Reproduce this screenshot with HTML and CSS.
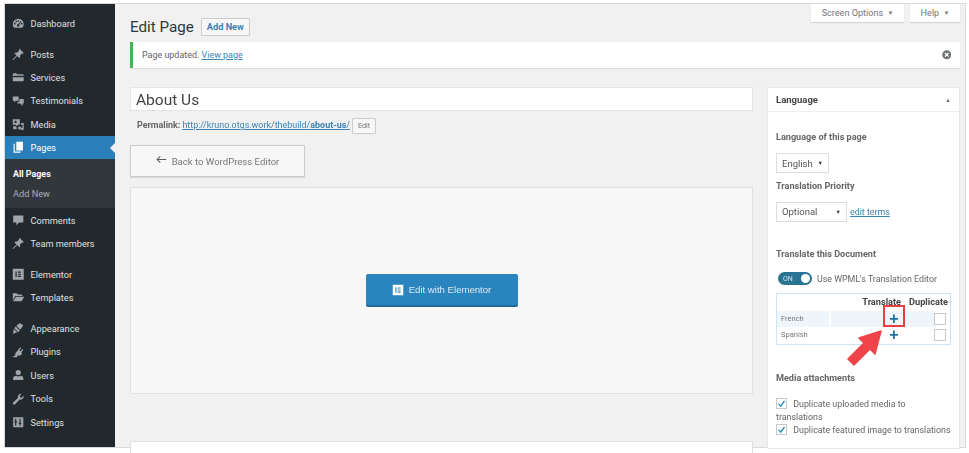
FILE: index.html
```html
<!DOCTYPE html>
<html lang="en">
<head>
<meta charset="utf-8">
<title>Edit Page</title>
<link rel="stylesheet" href="styles.css">
</head>
<body>
<svg class="sprite" width="0" height="0" aria-hidden="true">
  <symbol id="i-dash" viewBox="0 0 16 16"><path fill-rule="evenodd" d="M8 2.200a7 7 0 0 0-7 7c0 1.900.7 3.500 1.900 4.600h10.200A6.900 6.900 0 0 0 15 9.200a7 7 0 0 0-7-7zM3.500 9.600a1.100 1.100 0 1 1 0-2.200 1.100 1.100 0 0 1 0 2.200zm2-3a1.100 1.100 0 1 1 0-2.200 1.100 1.100 0 0 1 0 2.200zM8 4.200a1 1 0 1 1 0 2 1 1 0 0 1 0-2zm3.800 1.500L9.300 10a1.600 1.600 0 1 1-1.300-.8l2.900-4zm.7 3.900a1.100 1.100 0 1 1 0-2.200 1.100 1.100 0 0 1 0 2.200z"/></symbol>
  <symbol id="i-pin" viewBox="0 0 16 16"><path d="M9.700 1l5.300 5.300-1.100 1-1-.4-2.700 2.700c.4 1.300.2 2.700-.7 3.600L6.600 10.300 2 15l-1 .2.200-1L5.800 9.500 3 6.600c.9-.9 2.300-1.100 3.600-.7l2.700-2.700-.4-1z"/></symbol>
  <symbol id="i-folder" viewBox="0 0 16 16"><path d="M1 4.500l1-1.500h3.500l1 1.200H14l1 1v1H3L1 7zM1 13V8h14v4.300l-.8.700H1.800z"/></symbol>
  <symbol id="i-bubbles" viewBox="0 0 16 16"><path d="M1 2h7.500v5.500H5L3 9.500v-2H1zM9.500 5H15v6h-1.600v3L10.500 11H7V8.500h2.500z"/></symbol>
  <symbol id="i-media" viewBox="0 0 16 16"><path fill-rule="evenodd" d="M1 1.500h9v7H7.500L6 10.500 4.500 8.500H1zM3 5a1.500 1.500 0 0 0 3 0 1.500 1.500 0 0 0-3 0zM1.500 10.500h3l1.500 1.800v2.200H1.500zM8 14a2 2 0 1 0 0-2.500zM11.500 6.500H15v7.300a1.800 1.800 0 1 1-1.500-1.700V8.500h-2z"/></symbol>
  <symbol id="i-pages" viewBox="0 0 16 16"><path d="M5.500 1H14v11H5.500z"/><path d="M3.500 3.500V13.500H11V15H2V3.500z"/></symbol>
  <symbol id="i-comment" viewBox="0 0 16 16"><path d="M1.500 2h13v9H9l-3.500 3.500V11h-4z"/></symbol>
  <symbol id="i-elementor" viewBox="0 0 16 16"><path fill-rule="evenodd" d="M1 1h14v14H1zM4.500 4.500v7h1.500v-7zM7.500 4.500V6h4V4.500zM7.500 7.300v1.400h4V7.300zM7.500 10v1.500h4V10z"/></symbol>
  <symbol id="i-open" viewBox="0 0 16 16"><path d="M1 3h5l1.500 1.500H13V6.500H4L1 12zM4.800 7.500H15.500L12.500 13H1.500z"/></symbol>
  <symbol id="i-brush" viewBox="0 0 16 16"><path d="M14.500 4.500L10 1.200 5.500 4.800l5 5.200zM4.700 5.800L3 8l5 5 2-1.900zM2.300 8.800L1 15l5.800-1.800z"/></symbol>
  <symbol id="i-plug" viewBox="0 0 16 16"><path d="M10.500 1.500l1.300 1-2.300 3 1.500 1.200 2.400-2.800 1.100 1-2.400 3c.8 1.300.6 2.700-.5 3.600-1.300 1-2.800 1-4 .3L6 14.500H1.500v-1.300l3-1c-.7-1.500-.5-3 .5-4 .3-.4.500-.5.800-.6z"/></symbol>
  <symbol id="i-user" viewBox="0 0 16 16"><circle cx="8" cy="4.500" r="3.300"/><path d="M1.500 14v-2.500C1.500 9.500 4 8.500 5.500 8.500c1.500 1.300 3.500 1.300 5 0 1.500 0 4 1 4 3V14z"/></symbol>
  <symbol id="i-wrench" viewBox="0 0 16 16"><path d="M15 4.200a4 4 0 0 1-5.200 4L4 14.500a1.700 1.700 0 0 1-2.500-2.400L7.700 6A4 4 0 0 1 12.500 1L10 3.500l.4 2 2 .5L14.800 3.500c.1.200.2.500.2.700z"/></symbol>
  <symbol id="i-settings" viewBox="0 0 16 16"><path fill-rule="evenodd" d="M1.500 1.500h13v13h-13zM4 3.500v3.300H3v1.500h1v4.200h1.500V8.300h1V6.800h-1V3.500zM9.500 3.500v5H8.500V10h1v2.500H11V10h1V8.500h-1v-5z"/></symbol>
</svg>

<div class="frame">
  <nav class="menu">
    <ul class="menu-group">
      <li class="item"><svg class="ico"><use href="#i-dash"/></svg>Dashboard</li>
    </ul>
    <ul class="menu-group">
      <li class="item"><svg class="ico"><use href="#i-pin"/></svg>Posts</li>
      <li class="item"><svg class="ico"><use href="#i-folder"/></svg>Services</li>
      <li class="item"><svg class="ico"><use href="#i-bubbles"/></svg>Testimonials</li>
      <li class="item"><svg class="ico"><use href="#i-media"/></svg>Media</li>
      <li class="item current"><svg class="ico"><use href="#i-pages"/></svg>Pages</li>
      <li class="submenu">
        <div class="sub-item strong">All Pages</div>
        <div class="sub-item">Add New</div>
      </li>
      <li class="item"><svg class="ico"><use href="#i-comment"/></svg>Comments</li>
      <li class="item"><svg class="ico"><use href="#i-pin"/></svg>Team members</li>
    </ul>
    <ul class="menu-group">
      <li class="item"><svg class="ico"><use href="#i-elementor"/></svg>Elementor</li>
      <li class="item"><svg class="ico"><use href="#i-open"/></svg>Templates</li>
    </ul>
    <ul class="menu-group">
      <li class="item"><svg class="ico"><use href="#i-brush"/></svg>Appearance</li>
      <li class="item"><svg class="ico"><use href="#i-plug"/></svg>Plugins</li>
      <li class="item"><svg class="ico"><use href="#i-user"/></svg>Users</li>
      <li class="item"><svg class="ico"><use href="#i-wrench"/></svg>Tools</li>
      <li class="item"><svg class="ico"><use href="#i-settings"/></svg>Settings</li>
    </ul>
  </nav>

  <main class="main">
    <div class="tabs">
      <div class="tab tab-screen">Screen Options <span class="tri">▼</span></div>
      <div class="tab tab-help">Help <span class="tri">▼</span></div>
    </div>
    <div class="heading">
      <h1>Edit Page</h1>
      <a class="add-new">Add New</a>
    </div>
    <div class="notice">
      <span>Page updated. <a class="link">View page</a></span>
      <svg class="dismiss" viewBox="0 0 16 16"><circle cx="8" cy="8" r="7.500" fill="#6f7376"/><path d="M5 5l6 6M11 5l-6 6" stroke="#fff" stroke-width="2"/></svg>
    </div>
    <div class="columns">
      <div class="col-main">
        <div class="title-field">About Us</div>
        <div class="permalink"><b>Permalink:</b> <a class="link">http://kruno.otgs.work/thebuild/<b>about-us</b>/</a> <span class="edit-btn">Edit</span></div>
        <div class="back-btn">
          <svg class="back-arrow" viewBox="0 0 14 10"><path d="M1 5h12M5.500 1L1.500 5l4 4" fill="none" stroke="#555d66" stroke-width="1.300"/></svg>
          <span>Back to WordPress Editor</span>
        </div>
        <div class="editor-box">
          <div class="el-btn">
            <svg class="el-ico" viewBox="0 0 16 16"><path fill="#fff" fill-rule="evenodd" d="M1 1h14v14H1zM4.500 4.500v7h1.500v-7zM7.500 4.500V6h4V4.500zM7.500 7.300v1.400h4V7.300zM7.500 10v1.500h4V10z"/></svg>
            <span>Edit with Elementor</span>
          </div>
        </div>
        <div class="next-box"></div>
      </div>

      <aside class="panel">
        <div class="panel-head"><span>Language</span><span class="up">▲</span></div>
        <div class="panel-body">
          <div class="label lang-label">Language of this page</div>
          <div class="select select-lang">English <span class="tri-dark">▼</span></div>
          <div class="label prio-label">Translation Priority</div>
          <div class="prio-row">
            <div class="select select-prio">Optional <span class="tri-dark">▼</span></div>
            <a class="link">edit terms</a>
          </div>
          <div class="label doc-label">Translate this Document</div>
          <div class="toggle-row">
            <span class="toggle"><span>ON</span><i></i></span>
            <span>Use WPML's Translation Editor</span>
          </div>
          <div class="trans-table">
            <div class="t-head"><b>Translate</b><b>Duplicate</b></div>
            <div class="t-row shaded">
              <span class="t-lang">French</span>
              <span class="t-plus">+</span>
              <span class="t-check"></span>
            </div>
            <div class="t-row">
              <span class="t-lang">Spanish</span>
              <span class="t-plus">+</span>
              <span class="t-check"></span>
            </div>
            <span class="hilite"></span>
            <svg class="arrow" viewBox="0 0 40 40"><path d="M3 36L19 20l-5-5 22-7-6 23-5-5L9 42z" transform="translate(0 -3)" fill="#f1434a" stroke="#f1434a" stroke-width="1.500" stroke-linejoin="round"/></svg>
          </div>
          <div class="label media-label">Media attachments</div>
          <div class="check-line">
            <span class="cb"><svg viewBox="0 0 12 12"><path d="M2 6.500L5 9.500 10 2.500" fill="none" stroke="#1e8cbe" stroke-width="1.800"/></svg></span>
            <span>Duplicate uploaded media to<br>translations</span>
          </div>
          <div class="check-line">
            <span class="cb"><svg viewBox="0 0 12 12"><path d="M2 6.500L5 9.500 10 2.500" fill="none" stroke="#1e8cbe" stroke-width="1.800"/></svg></span>
            <span>Duplicate featured image to translations</span>
          </div>
        </div>
      </aside>
    </div>
  </main>
</div>
</body>
</html>
```

FILE: styles.css
```css
* { box-sizing: border-box; }
html, body { margin: 0; padding: 0; height: 100%; overflow: hidden; background: #fff; }
body { font-family: Roboto, "Open Sans", sans-serif; font-size: 9.500px; color: #444; }
.sprite { position: absolute; }
ul { list-style: none; margin: 0; padding: 0; }
a { text-decoration: none; }
h1 { margin: 0; }

.frame {
  display: flex;
  margin: 3px 3px 0 4px;
  height: 445px;
  border: 1px solid #d8d8d8;
  background: #f1f1f1;
  filter: blur(0.4px);
}

.menu { width: 110px; flex: none; background: #23282d; color: #eee; font-size: 9.200px; }
.menu-group { padding-top: 7.500px; }
.item { display: flex; align-items: center; height: 23.400px; padding-left: 6.500px; color: #dfe1e3; position: relative; }
.ico { width: 12.500px; height: 12.500px; fill: #a0a5aa; margin-right: 6.500px; flex: none; }
.item.current { background: #2a7fb8; color: #fff; }
.item.current .ico { fill: #fff; }
.item.current::after {
  content: ""; position: absolute; right: 0; top: 7px;
  border: 5px solid transparent; border-right-color: #f1f1f1; border-left: 0;
}
.submenu { background: #32373c; padding: 5.500px 0; height: 49px; }
.sub-item { height: 19px; line-height: 19px; padding-left: 8px; color: #a9adb1; font-size: 9.200px; }
.sub-item.strong { color: #fff; font-weight: 700; font-size: 8.900px; }

.main { flex: 1; min-width: 0; padding: 0 0 0 15px; }
.tabs { display: flex; justify-content: flex-end; gap: 6px; padding-right: 5px; height: 18px; }
.tab { background: #fff; color: #72777c; font-size: 9.100px; height: 18px; line-height: 18px; box-shadow: 0 1px 1px rgba(0,0,0,.12); text-align: center; }
.tab-screen { width: 93px; }
.tab-help { width: 50px; }
.tri { font-size: 6px; vertical-align: 1px; margin-left: 2px; }

.heading { display: flex; align-items: center; gap: 7px; margin-top: -4px; height: 18px; }
h1 { font-size: 15.200px; font-weight: 400; color: #32373c; }
.add-new { border: 1px solid #ccc; color: #3a83b5; background: #f7f7f7; font-weight: 700; font-size: 9.200px; padding: 0 5px; height: 18px; line-height: 16px; border-radius: 1px; }

.notice {
  display: flex; align-items: center; justify-content: space-between;
  margin: 6px 5px 0 0; height: 26px; padding: 0 9px 0 9px;
  background: #fff; border-left: 3px solid #46b450; box-shadow: 0 1px 1px rgba(0,0,0,.08);
  font-size: 8.950px; color: #5f656b;
}
.link { color: #3a83b5; text-decoration: underline; }
.dismiss { width: 9.500px; height: 9.500px; }

.columns { display: flex; gap: 14px; margin-top: 19px; align-items: flex-start; padding-right: 5px; }
.col-main { flex: 1; min-width: 0; }
.title-field { background: #fff; border: 1px solid #e4e4e4; height: 24px; line-height: 24px; font-size: 15.500px; padding-left: 5px; color: #444; }
.permalink { margin-top: 6px; height: 17px; line-height: 17px; padding-left: 7px; font-size: 8.950px; color: #666; white-space: nowrap; display: flex; align-items: center; gap: 2px; }
.edit-btn { border: 1px solid #ccc; background: #f7f7f7; font-size: 7.200px; height: 16px; line-height: 14px; padding: 0 5px; color: #777; border-radius: 1px; }
.back-btn { margin-top: 11px; width: 175px; height: 32px; background: #f7f7f7; border: 1px solid #ccc; box-shadow: 0 1px 1px rgba(0,0,0,.1); display: flex; align-items: center; justify-content: center; gap: 5px; font-size: 9.550px; color: #777; }
.back-arrow { width: 11px; height: 9px; margin-bottom: 3px; }
.editor-box { margin-top: 10px; height: 207px; background: #f7f7f7; border: 1px solid #e1e1e1; display: flex; align-items: center; justify-content: center; }
.el-btn { width: 152px; height: 33px; background: #2a84bd; border-bottom: 2px solid #1f6a9a; border-radius: 2px; display: flex; align-items: center; justify-content: center; gap: 5px; color: #dbe9f3; font-family: "Liberation Sans", sans-serif; font-size: 9.600px; }
.el-ico { width: 12px; height: 12px; }
.next-box { margin-top: 47px; height: 20px; background: #fff; border: 1px solid #e1e1e1; }

.panel { width: 193px; flex: none; background: #fff; border: 1px solid #e8e8e8; height: 362px; }
.panel-head { display: flex; justify-content: space-between; align-items: center; height: 24px; padding: 0 8px; border-bottom: 1px solid #eee; font-weight: 700; color: #444; font-size: 9.500px; }
.up { font-size: 6px; color: #72777c; }
.panel-body { padding: 0 8px; color: #666; font-size: 8.850px; }
.label { font-weight: 700; color: #666; font-size: 9.100px; line-height: 13px; }
.lang-label { margin-top: 18.500px; }
.select { border: 1px solid #ddd; background: #fff; color: #555; display: flex; justify-content: space-between; align-items: center; height: 20px; padding: 0 5px; font-size: 9.500px; }
.tri-dark { font-size: 5.500px; color: #333; }
.select-lang { width: 53px; margin-top: 9.500px; }
.prio-label { margin-top: 7px; }
.prio-row { display: flex; align-items: center; gap: 3px; margin-top: 8.500px; height: 20px; }
.select-prio { width: 71px; }
.doc-label { margin-top: 26.500px; }
.toggle-row { display: flex; align-items: center; gap: 5px; margin-top: 10.500px; height: 14px; padding-left: 2px; }
.toggle { width: 34px; height: 13px; border-radius: 7px; background: #2a7393; color: #cfe4ee; font-size: 7px; display: flex; align-items: center; justify-content: space-between; padding: 0 2px 0 5px; flex: none; }
.toggle i { width: 9px; height: 9px; border-radius: 50%; background: #fff; }
.trans-table { position: relative; margin-top: 7.500px; height: 52px; border: 1px solid #cfe3f0; width: 175px; }
.t-head { display: flex; justify-content: flex-end; gap: 8px; height: 16.500px; line-height: 16px; padding-right: 2px; color: #444; font-size: 9.200px; }
.t-head b { font-weight: 700; }
.t-row { display: flex; align-items: center; height: 16px; }
.shaded { background: linear-gradient(#eef6fb, #eef6fb) no-repeat 54px 0 / 105px 100%, linear-gradient(#eef6fb, #eef6fb) no-repeat 0 0 / 52px 100%; }
.t-lang { width: 106px; padding-left: 4px; font-size: 7.500px; color: #777; }
.t-plus { width: 22px; text-align: center; font-size: 16px; font-weight: 700; line-height: 16px; color: #1f6f9f; font-family: "Liberation Sans", sans-serif; }
.t-check { width: 12px; height: 12px; border: 1px solid #c8c8c8; background: #fff; margin-left: 29px; }
.hilite { position: absolute; left: 106px; top: 11px; width: 22px; height: 22px; border: 2px solid #e8403f; }
.arrow { position: absolute; left: 68px; top: 32px; width: 40px; height: 40px; }
.media-label { margin-top: 26.500px; }
.check-line { line-height: 13px; white-space: nowrap; }
.media-label + .check-line { margin-top: 13px; }
.cb { display: inline-block; width: 11px; height: 11px; border: 1px solid #c8c8c8; margin-right: 4px; vertical-align: -2px; }
.cb svg { display: block; width: 9px; height: 9px; }
```
